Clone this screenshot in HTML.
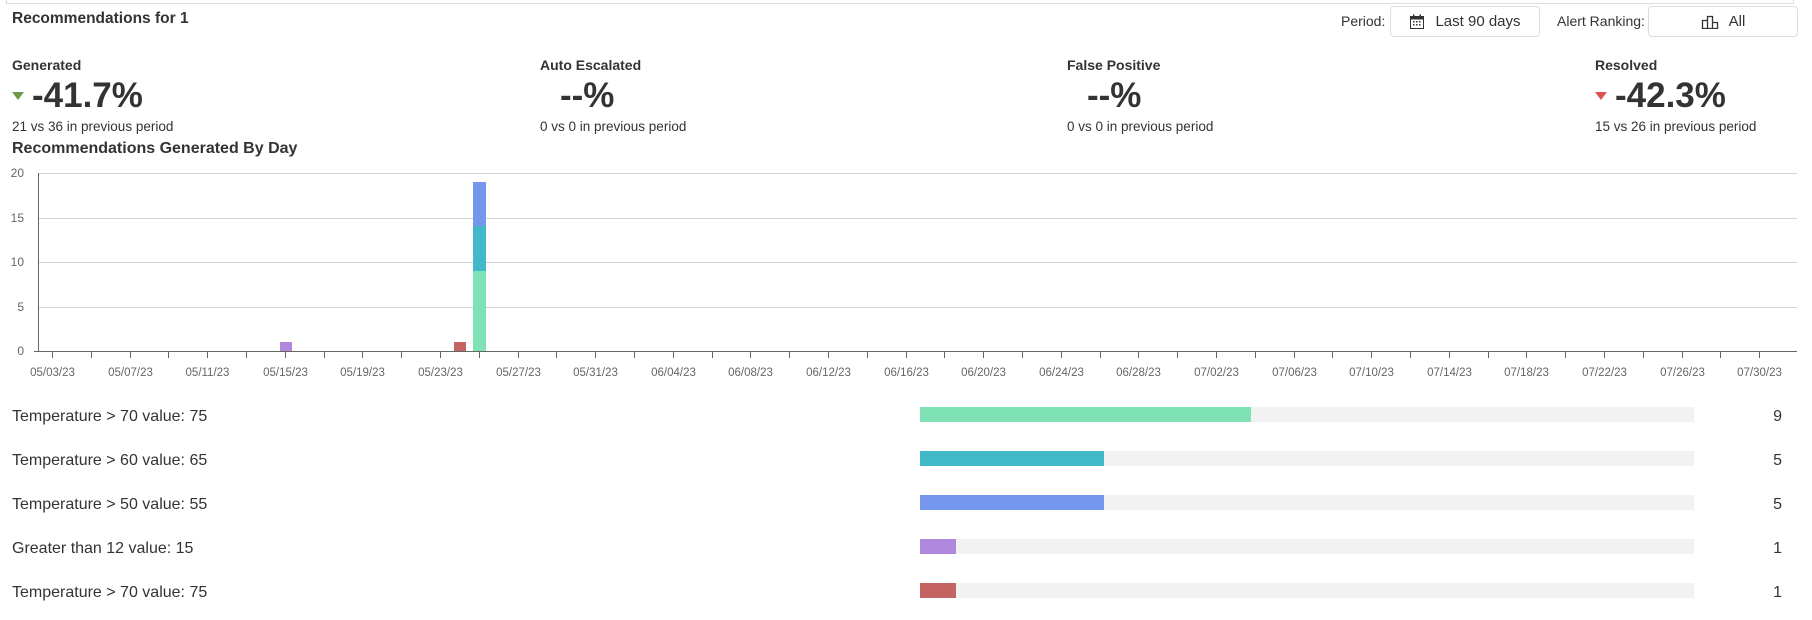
<!DOCTYPE html>
<html><head><meta charset="utf-8"><style>
*{box-sizing:border-box;margin:0;padding:0}
body{width:1812px;height:620px;background:#fff;font-family:"Liberation Sans",sans-serif;color:#333;position:relative;overflow:hidden}
.a{position:absolute;white-space:nowrap}
.btn{position:absolute;border:1px solid #ddd;border-radius:4px;height:31px;top:6px;font-size:15px;display:flex;align-items:center;justify-content:center;gap:10px;color:#333}
.lbl{font-size:14px;font-weight:bold;color:#333}
.big{font-size:35px;font-weight:bold;color:#333}
.sub{font-size:13.5px;color:#333}
.row{position:absolute;left:12px;font-size:16px;color:#333}
.track{position:absolute;left:920px;width:774px;height:15px;background:#f2f2f2}
.track div{height:15px}
.val{position:absolute;right:30px;font-size:16px}
</style></head><body>
<div class="a" style="left:6px;top:3px;width:1788px;height:1px;background:#ddd"></div>
<div class="a" style="left:6px;top:0;width:1px;height:4px;background:#ddd"></div>
<div class="a" style="left:1793px;top:0;width:1px;height:4px;background:#ddd"></div>
<div class="a lbl" style="left:12px;top:10px;font-size:15.5px">Recommendations for 1</div>
<div class="a" style="left:1341px;top:13px;font-size:14px">Period:</div>
<div class="btn" style="left:1390px;width:150px">
<svg width="16" height="16" viewBox="0 0 16 16"><rect x="1.5" y="2.5" width="13" height="12" fill="none" stroke="#333"/><rect x="1.5" y="2.5" width="13" height="3" fill="#333"/><rect x="4" y="0.5" width="1.5" height="3" fill="#333"/><rect x="10.5" y="0.5" width="1.5" height="3" fill="#333"/><g fill="#333"><rect x="4" y="7" width="1.5" height="1.5"/><rect x="7" y="7" width="1.5" height="1.5"/><rect x="10" y="7" width="1.5" height="1.5"/><rect x="4" y="10" width="1.5" height="1.5"/><rect x="7" y="10" width="1.5" height="1.5"/><rect x="10" y="10" width="1.5" height="1.5"/></g></svg>
<span>Last 90 days</span></div>
<div class="a" style="left:1557px;top:13px;font-size:14px">Alert Ranking:</div>
<div class="btn" style="left:1648px;width:150px">
<svg width="18" height="14" viewBox="0 0 18 14"><path d="M6.5 1.5h5v12h-5zM1.5 5.5h5v8h-5zM11.5 7.5h5v6h-5z" fill="none" stroke="#333" stroke-width="1.3"/></svg>
<span>All</span></div>

<div class="a lbl" style="left:12px;top:57px">Generated</div>
<div class="a" style="left:12px;top:92px;width:0;height:0;border-left:6px solid transparent;border-right:6px solid transparent;border-top:8px solid #6f9a4c"></div>
<div class="a big" style="left:32px;top:76px">-41.7%</div>
<div class="a sub" style="left:12px;top:119px">21 vs 36 in previous period</div>

<div class="a lbl" style="left:540px;top:57px">Auto Escalated</div>
<div class="a big" style="left:560px;top:76px">--%</div>
<div class="a sub" style="left:540px;top:119px">0 vs 0 in previous period</div>

<div class="a lbl" style="left:1067px;top:57px">False Positive</div>
<div class="a big" style="left:1087px;top:76px">--%</div>
<div class="a sub" style="left:1067px;top:119px">0 vs 0 in previous period</div>

<div class="a lbl" style="left:1595px;top:57px">Resolved</div>
<div class="a" style="left:1595px;top:92px;width:0;height:0;border-left:6px solid transparent;border-right:6px solid transparent;border-top:8px solid #d9534f"></div>
<div class="a big" style="left:1615px;top:76px">-42.3%</div>
<div class="a sub" style="left:1595px;top:119px">15 vs 26 in previous period</div>

<div class="a lbl" style="left:12px;top:140px;font-size:16px">Recommendations Generated By Day</div>

<svg class="a" style="left:0;top:160px" width="1812" height="230" viewBox="0 160 1812 230">
<g stroke="#d3d3d3" stroke-width="1">
<line x1="38" x2="1797" y1="173.5" y2="173.5"/><line x1="38" x2="1797" y1="218.5" y2="218.5"/><line x1="38" x2="1797" y1="262.5" y2="262.5"/><line x1="38" x2="1797" y1="307.5" y2="307.5"/>
</g>
<g fill="#666" font-family="Liberation Sans,sans-serif" font-size="12" text-anchor="end">
<text x="24" y="177">20</text><text x="24" y="222">15</text><text x="24" y="266">10</text><text x="24" y="311">5</text><text x="24" y="355">0</text>
</g>
<g stroke="#666"><line x1="38.5" x2="38.5" y1="173" y2="352"/><line x1="34" x2="1797" y1="351.5" y2="351.5"/></g>
<rect x="280" y="342" width="12" height="9" fill="#b088dd"/>
<rect x="454" y="342" width="12" height="9" fill="#c46462"/>
<rect x="473" y="271" width="13" height="80" fill="#7ee2b4"/>
<rect x="473" y="226" width="13" height="45" fill="#41b9c9"/>
<rect x="473" y="182" width="13" height="44" fill="#7496ec"/>
<g id="ticks" stroke="#666"></g>
<g id="labs" fill="#666" font-family="Liberation Sans,sans-serif" font-size="11.5" text-anchor="middle"></g>
</svg>

<div class="row" style="top:408px">Temperature &gt; 70 value: 75</div>
<div class="track" style="top:407px"><div style="width:331px;background:#7ee2b4"></div></div>
<div class="val" style="top:408px">9</div>
<div class="row" style="top:452px">Temperature &gt; 60 value: 65</div>
<div class="track" style="top:451px"><div style="width:184px;background:#41b9c9"></div></div>
<div class="val" style="top:452px">5</div>
<div class="row" style="top:496px">Temperature &gt; 50 value: 55</div>
<div class="track" style="top:495px"><div style="width:184px;background:#7496ec"></div></div>
<div class="val" style="top:496px">5</div>
<div class="row" style="top:540px">Greater than 12 value: 15</div>
<div class="track" style="top:539px"><div style="width:36px;background:#b088dd"></div></div>
<div class="val" style="top:540px">1</div>
<div class="row" style="top:584px">Temperature &gt; 70 value: 75</div>
<div class="track" style="top:583px"><div style="width:36px;background:#c46462"></div></div>
<div class="val" style="top:584px">1</div>

<script>
var labs=["05/03/23","05/07/23","05/11/23","05/15/23","05/19/23","05/23/23","05/27/23","05/31/23","06/04/23","06/08/23","06/12/23","06/16/23","06/20/23","06/24/23","06/28/23","07/02/23","07/06/23","07/10/23","07/14/23","07/18/23","07/22/23","07/26/23","07/30/23"];
var ns="http://www.w3.org/2000/svg",t=document.getElementById("ticks"),l=document.getElementById("labs");
for(var i=0;i<labs.length;i++){var x=Math.round(52+i*77.6)+0.5;
var ln=document.createElementNS(ns,"line");ln.setAttribute("x1",x);ln.setAttribute("x2",x);ln.setAttribute("y1",352);ln.setAttribute("y2",358);t.appendChild(ln);
var x2=Math.round(52+(i+0.5)*77.6)+0.5;if(i<labs.length-1){var l2=document.createElementNS(ns,"line");l2.setAttribute("x1",x2);l2.setAttribute("x2",x2);l2.setAttribute("y1",352);l2.setAttribute("y2",358);t.appendChild(l2);}
var tx=document.createElementNS(ns,"text");tx.setAttribute("x",x);tx.setAttribute("y",376);tx.textContent=labs[i];l.appendChild(tx);}
</script>
</body></html>
